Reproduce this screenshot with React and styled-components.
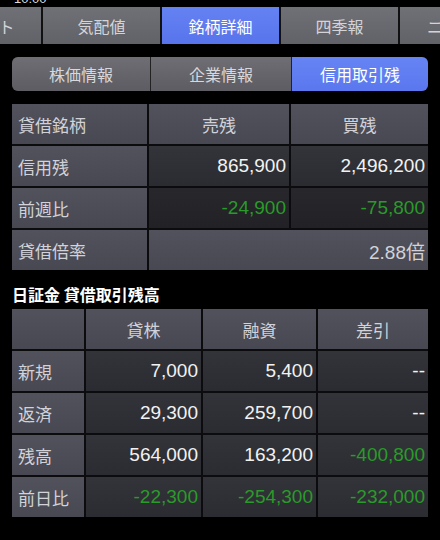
import React from 'react';
import styled, { createGlobalStyle } from 'styled-components';

const Global = createGlobalStyle`
    html, body {
        margin: 0;
        padding: 0;
        background: #000;
    }
    body {
        font-family: "Noto Sans CJK JP", "Liberation Sans", sans-serif;
        color: #fff;
    }
`;

const Screen = styled.div`
    width: 440px;
    height: 540px;
    overflow: hidden;
    background: #000;
`;

const StatusBar = styled.div`
    height: 7px;
    overflow: hidden;
    padding-left: 14px;
    font-family: "Liberation Sans", sans-serif;
    font-size: 13px;
    line-height: 13px;
    color: #ddd;

    span {
        display: block;
        margin-top: -8px;
    }
`;

const TabStrip = styled.div`
    display: flex;
    gap: 2px;
    height: 37px;
    margin-left: -76px;
    background: #111;
`;

const Tab = styled.div`
    flex: 0 0 117px;
    display: flex;
    align-items: center;
    justify-content: center;
    font-size: 16px;
    color: ${p => (p.$active ? '#fff' : '#d4d4d8')};
    background: ${p =>
        p.$active
            ? 'linear-gradient(#6582f3, #5874ec)'
            : 'linear-gradient(#707077, #616168)'};
`;

const Segments = styled.div`
    display: grid;
    grid-template-columns: 138px 140px 136px;
    gap: 1px;
    margin: 13px 12px 0;
    height: 34px;
    border-radius: 6px;
    overflow: hidden;
    background: #222;
`;

const Segment = styled.div`
    display: flex;
    align-items: center;
    justify-content: center;
    font-size: 16px;
    color: ${p => (p.$active ? '#fff' : '#d8d8dc')};
    background: ${p =>
        p.$active
            ? 'linear-gradient(#6784f4, #5a77ef)'
            : 'linear-gradient(#6e6e74, #5c5c62)'};
`;

const Grid = styled.div`
    display: grid;
    grid-template-columns: ${p => p.$cols};
    grid-auto-rows: ${p => p.$row}px;
    gap: 2px;
    margin: ${p => p.$margin};
    background: #0c0c0e;
`;

const Cell = styled.div`
    display: flex;
    align-items: center;
    padding: 0 ${p => (p.$align === 'right' ? '3px' : '6px')} 0 6px;
    justify-content: ${p =>
        p.$align === 'right' ? 'flex-end' : p.$align === 'center' ? 'center' : 'flex-start'};
    font-size: ${p => (p.$num ? '19px' : '17px')};
    font-family: ${p =>
        p.$num ? '"Liberation Sans", "Noto Sans CJK JP", sans-serif' : '"Noto Sans CJK JP", sans-serif'};
    color: ${p => (p.$green ? '#2a9a2a' : p.$head ? '#d2d2d8' : '#f2f2f2')};
    background: ${p =>
        p.$head
            ? 'linear-gradient(#51525c, #474852)'
            : p.$dark
            ? 'linear-gradient(#27272c, #222226)'
            : 'linear-gradient(#333439, #2b2c31)'};
    grid-column: ${p => p.$span || 'auto'};
`;

const Heading = styled.div`
    margin: 11px 12px 0;
    height: 26px;
    font-size: 16px;
    font-weight: bold;
    line-height: 26px;
    color: #fff;
`;

const Label = props => <Cell $head {...props} />;
const Num = props => <Cell $num $align="right" {...props} />;

const tabs = ['チャート', '気配値', '銘柄詳細', '四季報', 'ニュース'];
const segments = ['株価情報', '企業情報', '信用取引残'];

const loanRows = [
    ['新規', '7,000', '5,400', '--'],
    ['返済', '29,300', '259,700', '--'],
    ['残高', '564,000', '163,200', '-400,800'],
    ['前日比', '-22,300', '-254,300', '-232,000']
];

const isNeg = v => v.startsWith('-') && v !== '--';

const App = () => (
    <Screen>
        <Global />
        <StatusBar><span>10:00</span></StatusBar>
        <TabStrip>
            {tabs.map(t => (
                <Tab key={t} $active={t === '銘柄詳細'}>{t}</Tab>
            ))}
        </TabStrip>
        <Segments>
            {segments.map(s => (
                <Segment key={s} $active={s === '信用取引残'}>{s}</Segment>
            ))}
        </Segments>

        <Grid $cols="135px 140px 137px" $row={40} $margin="13px 12px 0">
            <Label>貸借銘柄</Label>
            <Label $align="center">売残</Label>
            <Label $align="center">買残</Label>

            <Label>信用残</Label>
            <Num>865,900</Num>
            <Num>2,496,200</Num>

            <Label>前週比</Label>
            <Num $green $dark>-24,900</Num>
            <Num $green $dark>-75,800</Num>

            <Label>貸借倍率</Label>
            <Num $span="span 2" $head>2.88倍</Num>
        </Grid>

        <Heading>日証金 貸借取引残高</Heading>

        <Grid $cols="72px 115px 113px 110px" $row={40} $margin="2px 12px 0">
            <Label />
            <Label $align="center">貸株</Label>
            <Label $align="center">融資</Label>
            <Label $align="center">差引</Label>
            {loanRows.map(([name, ...vals]) => (
                <React.Fragment key={name}>
                    <Label>{name}</Label>
                    {vals.map((v, i) => (
                        <Num key={i} $green={isNeg(v)}>{v}</Num>
                    ))}
                </React.Fragment>
            ))}
        </Grid>
    </Screen>
);

export default App;
